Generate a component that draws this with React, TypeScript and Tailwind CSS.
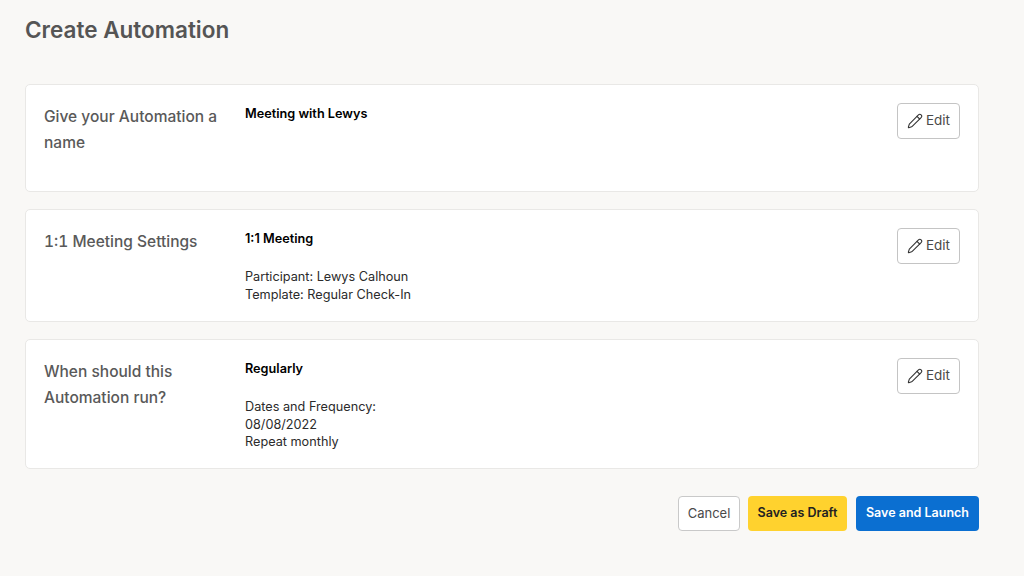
import { Pencil } from 'lucide-react'

function EditButton() {
  return (
    <button className="flex items-center justify-center gap-[3px] w-[63px] h-[36px] pb-[1px] bg-white border border-[#c4c4c4] rounded-[4px] text-[13.5px] text-[#4a4a4a] shrink-0">
      <Pencil size={16} strokeWidth={1.6} className="text-[#333]" />
      Edit
    </button>
  )
}

interface CardProps {
  label: React.ReactNode
  title: string
  lines?: string[]
  height: string
}

function Card({ label, title, lines, height }: CardProps) {
  return (
    <div className={`flex bg-white border border-[#e9e8e6] rounded-[5px] pt-[19px] px-[18px] ${height}`}>
      <div className="w-[201px] shrink-0 text-[15.5px] leading-[26px] font-medium text-[#595959] pr-2 tabular-nums">{label}</div>
      <div className="flex-1 pt-[1px] text-[12.7px] leading-[18px] text-[#2b2b2b]">
        <p className="font-semibold text-black">{title}</p>
        {lines && (
          <div className="mt-[20px] leading-[17.5px]">
            {lines.map(l => <p key={l}>{l}</p>)}
          </div>
        )}
      </div>
      <div className="-mt-[1px]">
        <EditButton />
      </div>
    </div>
  )
}

export default function App() {
  return (
    <div className="w-[1024px] h-[576px] overflow-hidden bg-[#f9f8f6] pl-[25px] pr-[45px] font-['Inter',sans-serif]">
      <h1 className="pt-[15px] h-[84px] text-[22.5px] leading-[30px] font-semibold text-[#555]">Create Automation</h1>

      <div className="flex flex-col gap-[17px]">
        <Card label="Give your Automation a name" title="Meeting with Lewys" height="h-[108px]" />
        <Card
          label="1:1 Meeting Settings"
          title="1:1 Meeting"
          lines={['Participant: Lewys Calhoun', 'Template: Regular Check-In']}
          height="h-[113px]"
        />
        <Card
          label="When should this Automation run?"
          title="Regularly"
          lines={['Dates and Frequency:', '08/08/2022', 'Repeat monthly']}
          height="h-[130px]"
        />
      </div>

      <div className="flex justify-end gap-[8px] mt-[27px]">
        <button className="w-[62px] h-[35px] bg-white border-[1.5px] border-[#c9c9c9] rounded-[4px] text-[13px] text-[#4a4a4a]">Cancel</button>
        <button className="w-[99px] h-[35px] mr-[1px] bg-[#ffd22e] rounded-[4px] text-[12.5px] font-semibold text-[#222]">Save as Draft</button>
        <button className="w-[123px] h-[35px] bg-[#0b6fd1] rounded-[4px] text-[12.5px] font-semibold text-white">Save and Launch</button>
      </div>
    </div>
  )
}
